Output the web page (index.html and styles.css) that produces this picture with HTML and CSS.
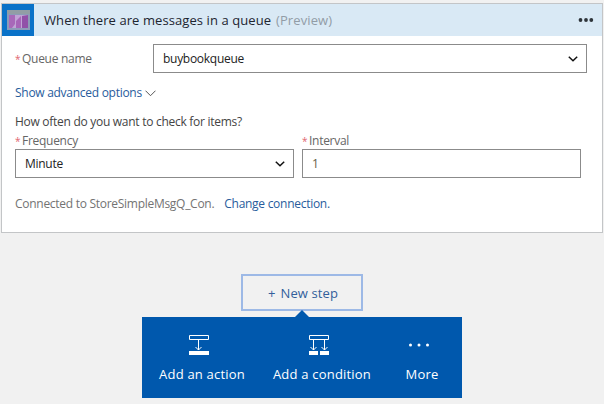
FILE: index.html
```
<!DOCTYPE html>
<html lang="en">
<head>
<meta charset="utf-8">
<title>Logic app designer</title>
<link rel="stylesheet" href="styles.css">
</head>
<body>
<section class="card">
  <header class="card-header">
    <svg class="logo" width="32" height="32" viewBox="0 0 32 32">
      <rect width="32" height="32" fill="#0a72c8"/>
      <rect x="5" y="6" width="23" height="20" fill="#8c9bb8"/>
      <rect x="5" y="6" width="23" height="4" fill="#929da5"/>
      <rect x="7" y="11" width="19" height="13" fill="#c0a3d5"/>
      <path d="M7 11h6v9l-3 4H7z" fill="#a868b9"/>
      <path d="M14 17l5-5v12h-5z" fill="#a765b8"/>
      <path d="M20 12l6-1v13h-6z" fill="#9150a8"/>
    </svg>
    <h1 class="title">When there are messages in a queue</h1>
    <span class="preview">(Preview)</span>
    <svg class="menu" width="16" height="6" viewBox="0 0 16 6"><circle cx="2.5" cy="3" r="1.9"/><circle cx="8" cy="3" r="1.9"/><circle cx="13.3" cy="3" r="1.9"/></svg>
  </header>
  <div class="card-body">
    <div class="queue-row">
      <label class="label queue-label"><i class="star">*</i><span>Queue name</span></label>
      <div class="field queue-field"><span>buybookqueue</span><svg class="caret" width="10" height="6" viewBox="0 0 10 6"><path d="M.8.8L5 4.8 9.2.8"/></svg></div>
    </div>
    <a class="link advanced"><span>Show advanced options</span><svg class="thin-caret" width="11" height="7" viewBox="0 0 11 7"><path d="M.5.7l5 5 5-5"/></svg></a>
    <p class="question">How often do you want to check for items?</p>
    <div class="schedule">
      <div>
        <label class="label"><i class="star">*</i><span>Frequency</span></label>
        <div class="field"><span>Minute</span><svg class="caret" width="10" height="6" viewBox="0 0 10 6"><path d="M.8.8L5 4.8 9.2.8"/></svg></div>
      </div>
      <div>
        <label class="label"><i class="star">*</i><span>Interval</span></label>
        <div class="field"><span class="number">1</span></div>
      </div>
    </div>
    <p class="connection"><span>Connected to StoreSimpleMsgQ_Con.</span><a class="link">Change connection.</a></p>
  </div>
</section>
<button class="new-step"><span>+</span><span>New step</span></button>
<nav class="popup">
  <a class="action">
    <svg width="20" height="20" viewBox="0 0 20 20"><path class="line" d="M.5.5h19v4H.5zM9.5 5v10M6.5 12l3 3 3-3"/><path class="solid" d="M0 16h20v4H0z"/></svg>
    <span>Add an action</span>
  </a>
  <a class="action">
    <svg width="20" height="20" viewBox="0 0 20 20"><path class="line" d="M.5.5h19v4H.5zM4.5 5v10M1.5 12l3 3 3-3M15.5 5v10M12.5 12l3 3 3-3"/><path class="solid" d="M0 16h9v4H0zM11 16h9v4h-9z"/></svg>
    <span>Add a condition</span>
  </a>
  <a class="action action-more">
    <svg width="22" height="20" viewBox="0 0 22 20"><g class="solid"><circle cx="2.5" cy="10" r="1.5"/><circle cx="11" cy="10" r="1.5"/><circle cx="19.5" cy="10" r="1.5"/></g></svg>
    <span>More</span>
  </a>
</nav>
</body>
</html>
```
FILE: styles.css
```
* { box-sizing: border-box; }
body {
  margin: 0;
  width: 604px;
  height: 404px;
  padding: 3px 1px 0;
  overflow: hidden;
  background: #f1f1f1;
  font: 12px/16px "Open Sans", "Noto Sans", sans-serif;
  letter-spacing: -.28px;
  color: #333;
  white-space: nowrap;
}
h1, p { margin: 0; font-weight: 400; }
.card { height: 230px; border: 1px solid #c3c5c7; background: #fff; }
.card-header { display: flex; align-items: center; height: 32px; padding-right: 8px; background: #d9e9f5; }
.logo { margin-right: 10px; }
.title { width: 232px; font-size: 13px; line-height: 18px; color: #1d2530; letter-spacing: .08px; }
.preview { font-size: 13px; line-height: 18px; color: #929ca6; letter-spacing: .1px; }
.menu { margin-left: auto; fill: #2e343a; }
.card-body { padding: 8px 15px 0 13px; }
.queue-row { display: flex; align-items: center; }
.queue-label { width: 138px; }
.label { display: flex; height: 16px; color: #666; }
.star { width: 7px; font-size: 10px; font-style: normal; color: #e0656f; }
.field { display: flex; align-items: center; justify-content: space-between; height: 29px; padding: 0 8px 0 9px; border: 1px solid #8b8b8b; background: #fff; color: #222; }
.queue-field { width: 434px; }
.caret { fill: none; stroke: #111; stroke-width: 1.5; }
.thin-caret { margin-left: 3px; fill: none; stroke: #555; }
.link { color: #285c9c; }
.advanced { display: flex; align-items: center; margin-top: 12px; }
.question { margin-top: 13px; color: #444; }
.schedule { display: grid; grid-template-columns: 279px 279px; gap: 8px; margin-top: 3px; }
.number { color: #665e48; }
.connection { display: flex; gap: 10px; margin-top: 18px; color: #737373; }
.new-step { display: flex; align-items: center; gap: 5px; width: 122px; height: 37px; margin: 41px 0 0 240px; padding: 0 0 0 25px; border: 2px solid #9db9e6; background: #f1f1f1; font: inherit; font-size: 13px; letter-spacing: .1px; color: #325f9b; }
.popup { position: relative; display: flex; width: 320px; height: 81px; margin: 6px 0 0 141px; padding-top: 18px; background: #0058ad; color: #fff; font-size: 13px; line-height: 18px; letter-spacing: .2px; }
.popup::before { content: ""; position: absolute; left: 153px; top: -7px; border: solid transparent; border-width: 0 7px 7px; border-bottom-color: #0058ad; }
.action { display: flex; flex-direction: column; align-items: center; gap: 10px; width: 120px; }
.action svg { margin-right: 6px; }
.action-more { width: 80px; }
.line { fill: none; stroke: #fff; }
.solid { fill: #fff; }
```
